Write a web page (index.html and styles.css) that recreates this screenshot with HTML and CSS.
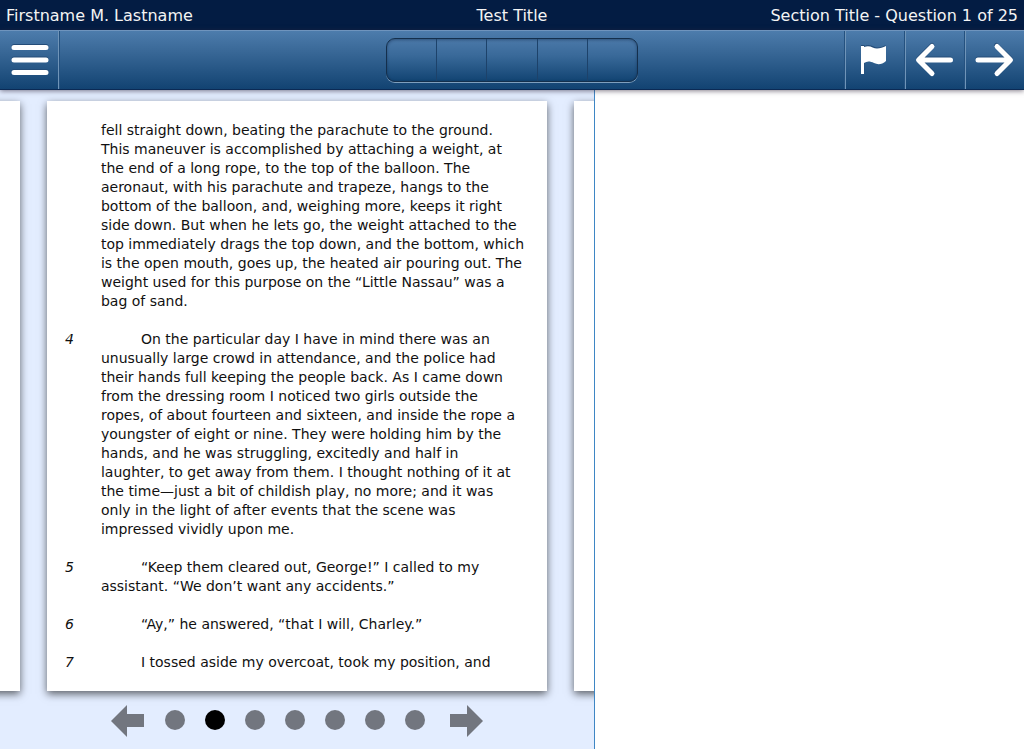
FILE: index.html
```html
<!DOCTYPE html>
<html lang="en">
<head>
<meta charset="utf-8">
<title>Test Title</title>
<link rel="stylesheet" href="styles.css">
</head>
<body>
<header class="titlebar">
  <span class="candidate">Firstname M. Lastname</span>
  <h1 class="test-title">Test Title</h1>
  <span class="progress">Section Title - Question 1 of 25</span>
</header>
<nav class="toolbar" aria-label="Test tools">
  <div class="side">
    <button class="tool menu" type="button" aria-label="Menu">
      <svg width="60" height="60" viewBox="0 0 60 60"><path class="rim" d="M14 16.500H46M14 29H46M14 41.500H46"/><path class="line" d="M14 17.500H46M14 30H46M14 42.500H46"/></svg>
    </button>
  </div>
  <div class="slots"><span></span><span></span><span></span><span></span><span></span></div>
  <div class="side end">
    <button class="tool" type="button" aria-label="Flag question">
      <svg width="60" height="60" viewBox="0 0 60 60"><path class="flag-rim" d="M15 15h3.500v1c6-3 9 1.500 13 1.500 3 0 6-1 8-2.500V31c-4 3-7 3.500-11 1.500-4-2-7-2-10 0V43h-3z"/><path class="flag" d="M15 16h3v1c6-2.500 9 1.500 13 1.500 3 0 6-1 9-2.500V31c-4 3.500-8 4-12 2-4-2-7-2-10 0V44h-3z"/></svg>
    </button>
    <button class="tool" type="button" aria-label="Previous question">
      <svg width="60" height="60" viewBox="0 0 60 60"><path class="rim thin" d="M44 29H13M26 15.500L12.500 29L26 42.500"/><path class="line thin" d="M44.500 30H13M26 16.500L12.500 30L26 43.500"/></svg>
    </button>
    <button class="tool" type="button" aria-label="Next question">
      <svg width="60" height="60" viewBox="0 0 60 60"><path class="rim thin" d="M12 29H44M30.500 15.500L44.500 29L30.500 42.500"/><path class="line thin" d="M12 30H44M31 16.500L44.500 30L31 43.500"/></svg>
    </button>
  </div>
</nav>
<main class="workspace">
  <section class="reader" aria-label="Passage">
    <div class="pages">
      <div class="page"></div>
      <article class="page">
        <p>fell straight down, beating the parachute to the ground.<br>This maneuver is accomplished by attaching a weight, at<br>the end of a long rope, to the top of the balloon. The<br>aeronaut, with his parachute and trapeze, hangs to the<br>bottom of the balloon, and, weighing more, keeps it right<br>side down. But when he lets go, the weight attached to the<br>top immediately drags the top down, and the bottom, which<br>is the open mouth, goes up, the heated air pouring out. The<br>weight used for this purpose on the “Little Nassau” was a<br>bag of sand.</p>
        <span class="num">4</span>
        <p class="indent">On the particular day I have in mind there was an<br>unusually large crowd in attendance, and the police had<br>their hands full keeping the people back. As I came down<br>from the dressing room I noticed two girls outside the<br>ropes, of about fourteen and sixteen, and inside the rope a<br>youngster of eight or nine. They were holding him by the<br>hands, and he was struggling, excitedly and half in<br>laughter, to get away from them. I thought nothing of it at<br>the time—just a bit of childish play, no more; and it was<br>only in the light of after events that the scene was<br>impressed vividly upon me.</p>
        <span class="num">5</span>
        <p class="indent">“Keep them cleared out, George!” I called to my<br>assistant. “We don’t want any accidents.”</p>
        <span class="num">6</span>
        <p class="indent">“Ay,” he answered, “that I will, Charley.”</p>
        <span class="num">7</span>
        <p class="indent">I tossed aside my overcoat, took my position, and</p>
      </article>
      <div class="page"></div>
    </div>
    <nav class="pager" aria-label="Passage pages">
      <button class="step" type="button" aria-label="Previous page"><svg width="34" height="34" viewBox="0 0 34 34"><path d="M0 18L16 2V11H33V24H16V34z"/></svg></button>
      <div class="dots">
        <button class="dot" type="button" aria-label="Page 1"></button>
        <button class="dot current" type="button" aria-label="Page 2" aria-current="page"></button>
        <button class="dot" type="button" aria-label="Page 3"></button>
        <button class="dot" type="button" aria-label="Page 4"></button>
        <button class="dot" type="button" aria-label="Page 5"></button>
        <button class="dot" type="button" aria-label="Page 6"></button>
        <button class="dot" type="button" aria-label="Page 7"></button>
      </div>
      <button class="step" type="button" aria-label="Next page"><svg width="34" height="34" viewBox="0 0 34 34"><path d="M34 18L18 2V11H1V24H18V34z"/></svg></button>
    </nav>
  </section>
  <section class="answer" aria-label="Question"></section>
</main>
</body>
</html>
```
FILE: styles.css
```css
* { box-sizing: border-box; }

body {
  margin: 0;
  height: 100vh;
  display: flex;
  flex-direction: column;
  overflow: hidden;
  font-family: Verdana, "DejaVu Sans", sans-serif;
  font-size: 14px;
  line-height: 19px;
  color: #111;
  background: #fff;
}

button {
  padding: 0;
  border: 0;
  background: none;
  cursor: pointer;
}

svg { display: block; }

.titlebar {
  display: grid;
  grid-template-columns: 1fr auto 1fr;
  align-items: center;
  height: 30px;
  padding: 0 6px;
  background: #031c43;
  color: #f4f4f4;
  font-size: 16px;
  white-space: nowrap;
}

.test-title {
  margin: 0;
  font-size: 16px;
  font-weight: normal;
}

.progress { text-align: right; }

.toolbar {
  position: relative;
  z-index: 1;
  display: flex;
  justify-content: space-between;
  align-items: center;
  height: 60px;
  border-top: 1px solid #6f94bd;
  border-bottom: 1px solid #0b2a55;
  background: linear-gradient(#4d7cac, #396897 35%, #124372);
  box-shadow: 0 1px 5px rgba(50, 40, 60, 0.6);
}

.side {
  flex: 1;
  display: flex;
  align-self: stretch;
}

.end { justify-content: flex-end; }

.tool {
  width: 60px;
  height: 58px;
  overflow: hidden;
  border-left: 1px solid #6f94b8;
  box-shadow: -1px 0 #24517f;
}

.tool:last-child { width: 59px; }

.tool svg { margin-top: -1px; }

.tool.menu {
  width: 59px;
  border-left: 0;
  border-right: 1px solid #6f94b8;
  box-shadow: 1px 0 #24517f;
}

.line, .rim {
  fill: none;
  stroke: #fff;
  stroke-width: 5;
  stroke-linecap: round;
}

.rim { stroke: #244c78; }
.thin { stroke-linejoin: round; }
.flag { fill: #fff; }
.flag-rim { fill: #244c78; }

.slots {
  display: flex;
  width: 252px;
  height: 44px;
  border: 1px solid #142f4c;
  border-radius: 9px;
  background: linear-gradient(#4b79a9, #396999 40%, #124473);
  box-shadow: 0 1px #7f9fbd, inset 0 1px 3px rgba(0, 20, 50, 0.4);
}

.slots span {
  flex: 1;
  border-left: 1px solid #1d426a;
}

.slots span:first-child { border-left: 0; }

.workspace {
  flex: 1;
  display: flex;
  min-height: 0;
}

.reader {
  width: 58%;
  display: flex;
  flex-direction: column;
  overflow: hidden;
  background: #e3edff;
}

.answer {
  flex: 1;
  border-left: 1px solid #3e86c4;
}

.pages {
  flex: 1;
  display: flex;
  justify-content: center;
  gap: 27px;
  min-height: 0;
  padding-top: 11px;
}

.page {
  flex: none;
  display: grid;
  grid-template-columns: 36px 1fr;
  align-content: start;
  row-gap: 19px;
  width: 500px;
  padding: 20px 18px 0;
  background: #fff;
  box-shadow: 0 3px 8px rgba(0, 0, 0, 0.6);
  white-space: nowrap;
}

.page p {
  grid-column: 2;
  margin: 0;
}

.page .indent { text-indent: 40px; }

.num { font-style: italic; }

.pager {
  display: flex;
  justify-content: center;
  align-items: center;
  height: 58px;
}

.step { fill: #72767f; }

.dots {
  display: flex;
  gap: 20px;
  margin: 0 24px 0 20px;
}

.dot {
  width: 20px;
  height: 20px;
  border-radius: 50%;
  background: #72767f;
}

.current { background: #000; }
```
